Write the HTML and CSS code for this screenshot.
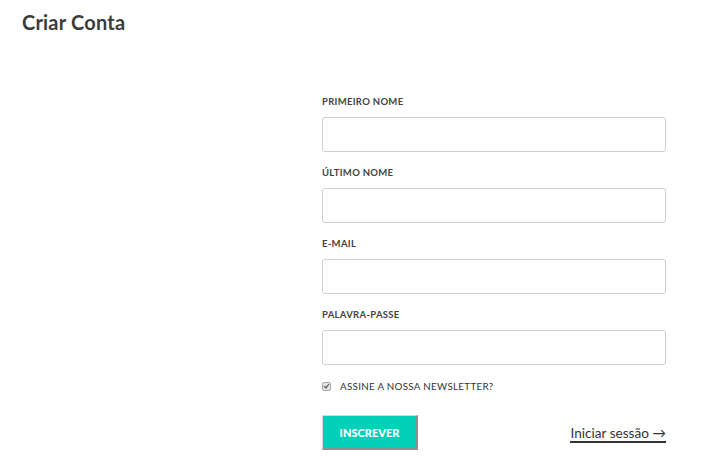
FILE: index.html
```html
<!DOCTYPE html>
<html lang="pt">
<head>
<meta charset="utf-8">
<title>Criar Conta</title>
<link rel="stylesheet" href="styles.css">
</head>
<body>
<div class="page">
  <h1 class="title">Criar Conta</h1>
  <div class="layout">
    <div class="aside"></div>
    <form class="form">
      <div class="field">
        <label class="label">PRIMEIRO NOME</label>
        <input class="input" type="text">
      </div>
      <div class="field">
        <label class="label">ÚLTIMO NOME</label>
        <input class="input" type="text">
      </div>
      <div class="field">
        <label class="label">E-MAIL</label>
        <input class="input" type="email">
      </div>
      <div class="field">
        <label class="label">PALAVRA-PASSE</label>
        <input class="input" type="password">
      </div>
      <label class="check">
        <input class="checkbox" type="checkbox" checked>
        <span>ASSINE A NOSSA NEWSLETTER?</span>
      </label>
      <div class="actions">
        <button class="submit" type="button">INSCREVER</button>
        <a class="login" href="#">Iniciar sessão →</a>
      </div>
    </form>
  </div>
</div>
</body>
</html>
```
FILE: styles.css
```css
* { box-sizing: border-box; }
html, body { margin: 0; padding: 0; background: #fff; }
body {
  font-family: "Lato", "Open Sans", sans-serif;
  color: #333;
}
.page { padding: 11px 22px 0 22px; }
.title {
  margin: 0;
  font-size: 20px;
  font-weight: 700;
  color: #3b3b3b;
  line-height: 23px;
  letter-spacing: 0.2px;
}
.layout {
  display: grid;
  grid-template-columns: 300px 344px;
  margin-top: 62px;
}
.form { display: flex; flex-direction: column; }
.field { display: flex; flex-direction: column; margin-bottom: 15px; }
.label {
  font-size: 9.5px;
  font-weight: 700;
  color: #444;
  letter-spacing: 0.3px;
  line-height: 12px;
  margin-bottom: 9px;
}
.input {
  height: 35px;
  width: 344px;
  border: 1px solid #cfcfcf;
  border-radius: 3px;
  background: #fff;
  margin: 0;
}
.check {
  display: flex;
  align-items: center;
  gap: 9px;
  font-size: 9.8px;
  color: #333;
  letter-spacing: 0.3px;
  margin-top: 0px;
}
.checkbox {
  appearance: none;
  -webkit-appearance: none;
  margin: 0;
  width: 9px;
  height: 9px;
  border: 1px solid #a8a8a8;
  border-radius: 2px;
  background: #e4e4e4;
  position: relative;
}
.checkbox:checked::after {
  content: "";
  position: absolute;
  left: 2px;
  top: 0px;
  width: 2px;
  height: 4px;
  border: solid #444;
  border-width: 0 1.5px 1.5px 0;
  transform: rotate(40deg);
}
.actions {
  display: flex;
  justify-content: space-between;
  align-items: center;
  margin-top: 23px;
}
.submit {
  width: 96px;
  height: 35px;
  background: #00d0b8;
  color: #fff;
  font-family: "Lato", sans-serif;
  font-weight: 900;
  font-size: 11px;
  border-style: solid;
  border-width: 1px 2px 2px 1px;
  border-color: #d8d8d8 #8f8f8f #8f8f8f #d8d8d8;
  padding: 0;
}
.login {
  font-size: 13.6px;
  color: #333;
  text-decoration: none;
  border-bottom: 2px solid #333;
  line-height: 15px;
  margin-top: 4px;
}
```
